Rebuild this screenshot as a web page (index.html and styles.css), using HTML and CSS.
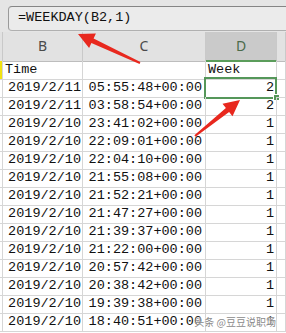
FILE: index.html
```html
<!DOCTYPE html>
<html lang="zh">
<head>
<meta charset="utf-8">
<link rel="stylesheet" href="styles.css">
</head>
<body>
<div class="sheet">
  <div class="formula-bar"><div class="fx-box">=WEEKDAY(B2,1)</div></div>
  <div class="row head">
    <div class="c a"></div>
    <div class="c hb">B</div>
    <div class="c hb">C</div>
    <div class="c hb hd">D</div>
    <div class="c"></div>
  </div>
  <div class="row">
    <div class="c a mark"></div>
    <div class="c l">Time</div>
    <div class="c"></div>
    <div class="c l">Week</div>
    <div class="c"></div>
  </div>
  <div class="row"><div class="c a"></div><div class="c r">2019/2/11</div><div class="c r t">05:55:48+00:00</div><div class="c r n sel"><span class="selbox"></span><span class="handle"></span>2</div><div class="c"></div></div>
  <div class="row"><div class="c a"></div><div class="c r">2019/2/11</div><div class="c r t">03:58:54+00:00</div><div class="c r n">2</div><div class="c"></div></div>
  <div class="row"><div class="c a"></div><div class="c r">2019/2/10</div><div class="c r t">23:41:02+00:00</div><div class="c r n">1</div><div class="c"></div></div>
  <div class="row"><div class="c a"></div><div class="c r">2019/2/10</div><div class="c r t">22:09:01+00:00</div><div class="c r n">1</div><div class="c"></div></div>
  <div class="row"><div class="c a"></div><div class="c r">2019/2/10</div><div class="c r t">22:04:10+00:00</div><div class="c r n">1</div><div class="c"></div></div>
  <div class="row"><div class="c a"></div><div class="c r">2019/2/10</div><div class="c r t">21:55:08+00:00</div><div class="c r n">1</div><div class="c"></div></div>
  <div class="row"><div class="c a"></div><div class="c r">2019/2/10</div><div class="c r t">21:52:21+00:00</div><div class="c r n">1</div><div class="c"></div></div>
  <div class="row"><div class="c a"></div><div class="c r">2019/2/10</div><div class="c r t">21:47:27+00:00</div><div class="c r n">1</div><div class="c"></div></div>
  <div class="row"><div class="c a"></div><div class="c r">2019/2/10</div><div class="c r t">21:39:37+00:00</div><div class="c r n">1</div><div class="c"></div></div>
  <div class="row"><div class="c a"></div><div class="c r">2019/2/10</div><div class="c r t">21:22:00+00:00</div><div class="c r n">1</div><div class="c"></div></div>
  <div class="row"><div class="c a"></div><div class="c r">2019/2/10</div><div class="c r t">20:57:42+00:00</div><div class="c r n">1</div><div class="c"></div></div>
  <div class="row"><div class="c a"></div><div class="c r">2019/2/10</div><div class="c r t">20:38:42+00:00</div><div class="c r n">1</div><div class="c"></div></div>
  <div class="row"><div class="c a"></div><div class="c r">2019/2/10</div><div class="c r t">19:39:38+00:00</div><div class="c r n">1</div><div class="c"></div></div>
  <div class="row"><div class="c a"></div><div class="c r">2019/2/10</div><div class="c r t">18:40:51+00:00</div><div class="c r n">1</div><div class="c"></div></div>

  <svg class="arrows" width="286" height="333" viewBox="0 0 286 333">
    <polygon fill="#e8281e" points="78,34 95.9,33.6 93.6,38.5 140.4,62.1 139.6,63.9 91.4,43.1 89.1,48"/>
    <polygon fill="#e8281e" points="240,100 232.5,116.2 229.1,112 195.6,136.8 194.4,135.2 225.9,108 222.5,103.8"/>
  </svg>
  <div class="watermark">头条 @豆豆说职场</div>
</div>
</body>
</html>
```
FILE: styles.css
```css
html, body {
  margin: 0;
  padding: 0;
  background: #ffffff;
}
.sheet {
  position: relative;
  width: 286px;
  height: 333px;
  overflow: hidden;
  font-family: "Liberation Mono", "DejaVu Sans Mono", monospace;
  font-size: 13.5px;
  color: #111;
}
.formula-bar {
  height: 32px;
  box-sizing: border-box;
  background: #e5e5e5;
  padding: 6px 0 0 8px;
}
.fx-box {
  height: 25px;
  box-sizing: border-box;
  background: #ebebeb;
  border: 1px solid #9a9a9a;
  border-top-color: #858585;
  border-bottom-color: #b0b0b0;
  border-right: none;
  border-radius: 4px 0 0 4px;
  padding-left: 9px;
  line-height: 22px;
  color: #111;
}
.row {
  display: grid;
  grid-template-columns: 3px 80px 123px 71px 1fr;
  height: 18px;
}
.c {
  position: relative;
  box-sizing: border-box;
  border-right: 1px solid #d6d6d6;
  border-bottom: 1px solid #d6d6d6;
  line-height: 18px;
  white-space: nowrap;
  overflow: visible;
}
.head {
  height: 29px;
  background: #e2e2e2;
}
.head .c {
  border-right-color: #c9c9c9;
  border-bottom-color: #bdbdbd;
}
.hb {
  font-family: "Noto Sans", "Liberation Sans", sans-serif;
  font-size: 14px;
  color: #4a4a4a;
  text-align: center;
  line-height: 28px;
}
.hd {
  background: #cacaca;
  color: #4b6b4b;
  border-bottom: 2px solid #5b9d5b !important;
}
.mark {
  background: #f2e312;
}
.l {
  padding-left: 2px;
}
.r {
  text-align: right;
  padding-right: 1px;
}
.t {
  padding-right: 3px;
}
.n {
  padding-right: 2px;
}
.selbox {
  position: absolute;
  left: -2px;
  top: -2px;
  right: -1px;
  bottom: -2px;
  border: 2px solid #55975a;
  pointer-events: none;
}
.handle {
  position: absolute;
  right: -3px;
  bottom: -3px;
  width: 5px;
  height: 5px;
  background: #55975a;
  border: 1px solid #ffffff;
  border-right: none;
  border-bottom: none;
}
.arrows {
  position: absolute;
  left: 0;
  top: 0;
  pointer-events: none;
}
.watermark {
  position: absolute;
  right: 10px;
  bottom: 5px;
  font-family: "Noto Sans CJK SC", sans-serif;
  font-size: 10px;
  line-height: 12px;
  color: #8a8a8a;
  text-shadow: 0 0 2px #fff, 0 0 2px #fff;
}
```
